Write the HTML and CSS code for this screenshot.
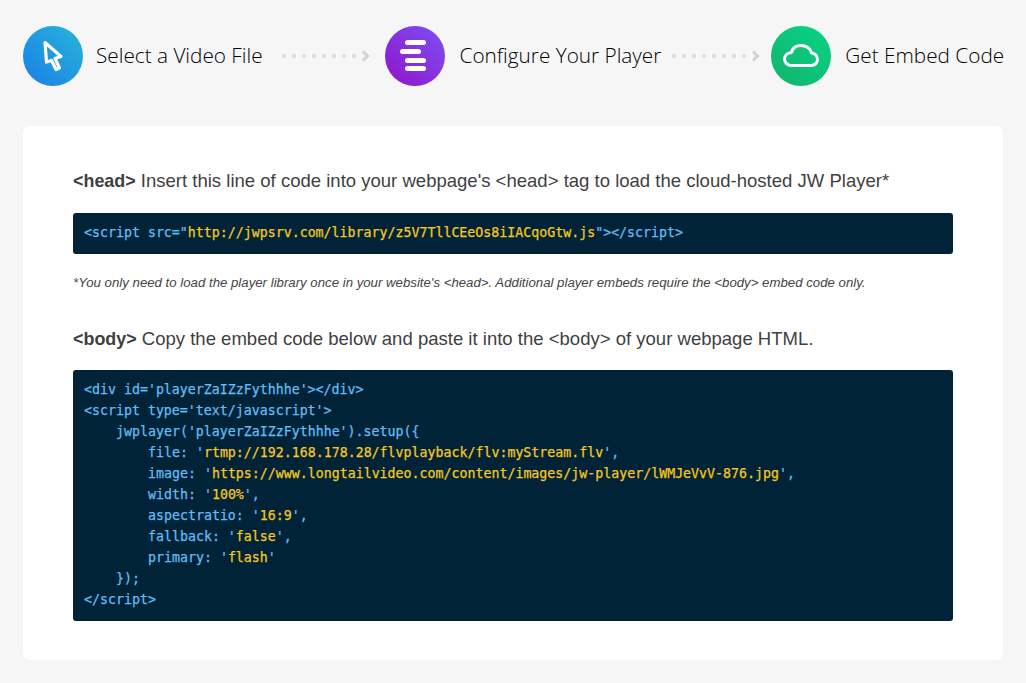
FILE: index.html
```html
<!DOCTYPE html>
<html lang="en">
<head>
<meta charset="utf-8">
<title>Get Embed Code</title>
<link rel="stylesheet" href="styles.css">
</head>
<body>
<header class="steps">
  <div class="step">
    <span class="badge badge-blue">
      <svg width="60" height="60" viewBox="0 0 60 60"><path d="M22 16.5 L38 30.5 L32 32.5 L36.5 42 L33 43.5 L28.5 34.5 L23.5 36 Z" fill="none" stroke="#fff" stroke-width="3.2" stroke-linejoin="round"/></svg>
    </span>
    <span class="step-label label-1">Select a Video File</span>
  </div>
  <div class="sep sep-1"><i></i><i></i><i></i><i></i><i></i><i></i><i></i><i></i><svg width="9" height="12" viewBox="0 0 9 12"><path d="M2 1.5 L6.5 6 L2 10.5" fill="none" stroke="#d2d2d2" stroke-width="3"/></svg></div>
  <div class="step">
    <span class="badge badge-purple">
      <svg width="60" height="60" viewBox="0 0 60 60" fill="#fff"><rect x="20" y="14" width="21" height="5" rx="2.5"/><rect x="15" y="23" width="21" height="5" rx="2.5"/><rect x="20" y="32" width="21" height="5" rx="2.5"/><rect x="20" y="40" width="21" height="5" rx="2.5"/></svg>
    </span>
    <span class="step-label label-2">Configure Your Player</span>
  </div>
  <div class="sep sep-2"><i></i><i></i><i></i><i></i><i></i><i></i><i></i><i></i><svg width="9" height="12" viewBox="0 0 9 12"><path d="M2 1.5 L6.5 6 L2 10.5" fill="none" stroke="#d2d2d2" stroke-width="3"/></svg></div>
  <div class="step">
    <span class="badge badge-green">
      <svg width="60" height="60" viewBox="0 0 60 60"><path d="M21 39.5 H40 C44 39.5 46.5 36.5 46.5 33.5 C46.5 30 44 27.5 40.5 27 C39.5 22.5 35 19.5 30 19.5 C25 19.5 21.5 22.5 20.5 26.5 C16.5 27 13.5 29.5 13.5 33 C13.5 36.5 16.5 39.5 21 39.5 Z" fill="none" stroke="#fff" stroke-width="3" stroke-linejoin="round"/></svg>
    </span>
    <span class="step-label label-3">Get Embed Code</span>
  </div>
</header>

<main class="card">
  <p class="lead"><strong>&lt;head&gt;</strong> Insert this line of code into your webpage's &lt;head&gt; tag to load the cloud-hosted JW Player*</p>
  <div class="code code-short">
    <div class="line"><span class="tag">&lt;script src="</span><span class="str">http://jwpsrv.com/library/z5V7TllCEeOs8iIACqoGtw.js</span><span class="tag">"&gt;&lt;/script&gt;</span></div>
  </div>
  <p class="note">*You only need to load the player library once in your website's &lt;head&gt;. Additional player embeds require the &lt;body&gt; embed code only.</p>
  <p class="lead lead-body"><strong>&lt;body&gt;</strong> Copy the embed code below and paste it into the &lt;body&gt; of your webpage HTML.</p>
  <div class="code code-long">
    <div class="line">&lt;div id='playerZaIZzFythhhe'&gt;&lt;/div&gt;</div>
    <div class="line">&lt;script type='text/javascript'&gt;</div>
    <div class="line indent-1">jwplayer('playerZaIZzFythhhe').setup({</div>
    <div class="line indent-2">file: '<span class="str">rtmp://192.168.178.28/flvplayback/flv:myStream.flv</span>',</div>
    <div class="line indent-2">image: '<span class="str">https://www.longtailvideo.com/content/images/jw-player/lWMJeVvV-876.jpg</span>',</div>
    <div class="line indent-2">width: '<span class="str">100%</span>',</div>
    <div class="line indent-2">aspectratio: '<span class="str">16:9</span>',</div>
    <div class="line indent-2">fallback: '<span class="str">false</span>',</div>
    <div class="line indent-2">primary: '<span class="str">flash</span>'</div>
    <div class="line indent-1">});</div>
    <div class="line">&lt;/script&gt;</div>
  </div>
</main>
</body>
</html>
```
FILE: styles.css
```css
* { box-sizing: border-box; }
html, body { margin: 0; padding: 0; }
body {
  width: 1026px;
  height: 683px;
  overflow: hidden;
  background: #f6f6f6;
  padding: 26px 23px 0;
  font-family: "Liberation Sans", Arial, sans-serif;
  color: #3f3f3f;
}
.steps { display: flex; align-items: center; height: 60px; }
.step { display: flex; align-items: center; flex: none; }
.badge { width: 60px; height: 60px; border-radius: 50%; flex: none; display: block; }
.badge svg { display: block; }
.badge-blue { background: linear-gradient(45deg, #1a7fe8, #27b5d8); }
.badge-purple { background: linear-gradient(45deg, #9312c8, #7a52f5); }
.badge-green { background: linear-gradient(45deg, #14b36a, #06d488); }
.step-label {
  font-family: "Open Sans", sans-serif;
  font-weight: 300;
  font-size: 20.75px;
  color: #000;
  white-space: nowrap;
  position: relative;
  top: -1px;
}
.label-1 { margin-left: 13px; }
.label-2 { margin-left: 15px; }
.label-3 { margin-left: 14px; }
.sep { display: flex; align-items: center; gap: 6px; flex: none; }
.sep i { width: 4px; height: 4px; border-radius: 50%; background: #dcdcdc; display: block; }
.sep svg { display: block; margin-left: -1px; }
.sep-1 { margin-left: 19px; margin-right: 15px; }
.sep-2 { margin-left: 11px; margin-right: 11px; }
.card {
  margin-top: 40px;
  width: 980px;
  height: 534px;
  background: #fff;
  border-radius: 7px;
  padding: 44px 50px 0;
}
.lead { margin: 0; font-size: 18.55px; line-height: 22px; white-space: nowrap; }
.lead strong { font-weight: 700; font-size: 17.9px; }
.code {
  background: #002338;
  border-radius: 3px;
  padding: 9px 11px;
  font-family: "DejaVu Sans Mono", monospace;
  font-size: 13.28px;
  line-height: 21px;
  color: #63bdf5;
  -webkit-text-stroke: 0.25px currentColor;
}
.line { white-space: pre; }
.indent-1 { padding-left: 32px; }
.indent-2 { padding-left: 64px; }
.str { color: #f8c81c; }
.code-short { margin-top: 21px; height: 41px; }
.note { margin: 21px 0 0; font-size: 13.23px; font-style: italic; line-height: 16px; color: #444; white-space: nowrap; }
.lead-body { margin-top: 37px; }
.code-long { margin-top: 20px; height: 251px; }
```
